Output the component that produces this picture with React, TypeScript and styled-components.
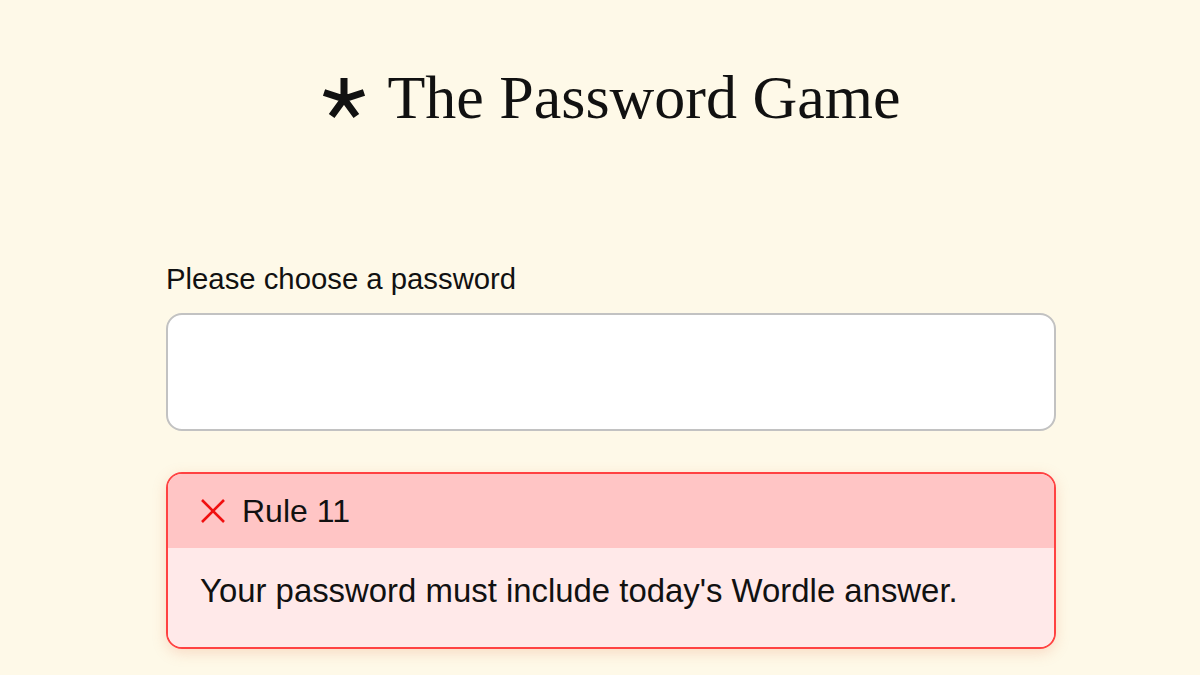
import React from 'react';
import styled, { createGlobalStyle } from 'styled-components';

const GlobalStyle = createGlobalStyle`
  html, body {
    margin: 0;
    padding: 0;
    background: #fef9e8;
  }
  body {
    font-family: "Liberation Sans", Arial, sans-serif;
    color: #111;
  }
`;

const Page = styled.div`
  width: 1200px;
  height: 675px;
  overflow: hidden;
  box-sizing: border-box;
  padding-left: 22px;
  display: flex;
  flex-direction: column;
  align-items: center;
`;

const Title = styled.h1`
  margin: 65px 0 0;
  display: flex;
  align-items: center;
  gap: 20px;
  font-family: "Liberation Serif", "Times New Roman", serif;
  font-weight: 400;
  font-size: 62px;
  line-height: 64px;
  color: #111;
`;

const Star = styled.svg`
  width: 46px;
  height: 46px;
  flex: none;
  margin-top: 4px;
`;

const Form = styled.div`
  width: 890px;
  margin-top: 133px;
  display: flex;
  flex-direction: column;
`;

const Label = styled.label`
  font-size: 29.3px;
  line-height: 34px;
  margin-bottom: 17px;
`;

const PasswordBox = styled.div`
  height: 118px;
  background: #fff;
  border: 2px solid #c2c2c2;
  border-radius: 16px;
  box-sizing: border-box;
`;

const Rule = styled.div`
  margin-top: 41px;
  border: 2px solid #ff4242;
  border-radius: 16px;
  overflow: hidden;
  box-shadow: 0 4px 14px rgba(230, 130, 90, 0.25);
`;

const RuleHead = styled.div`
  height: 74px;
  background: #ffc5c5;
  display: flex;
  align-items: center;
  gap: 16px;
  padding-left: 32px;
  font-size: 32px;
`;

const RuleBody = styled.div`
  background: #ffe9e9;
  height: 99px;
  box-sizing: border-box;
  padding: 24px 32px 0;
  font-size: 32.9px;
  line-height: 38px;
`;

const Cross = () => (
  <svg width="26" height="26" viewBox="0 0 26 26">
    <path d="M2 2 L24 24 M24 2 L2 24" stroke="#f01010" strokeWidth="2.6" fill="none" />
  </svg>
);

const Asterisk = () => {
  const arms = [-90, -18, 54, 126, 198].map((a) => {
    const r = (a * Math.PI) / 180;
    return `M23 23 L${23 + 21 * Math.cos(r)} ${23 + 21 * Math.sin(r)}`;
  });
  return (
    <Star viewBox="0 0 46 46">
      <path d={arms.join(' ')} stroke="#111" strokeWidth="7" fill="none" />
    </Star>
  );
};

export default function App() {
  return (
    <Page>
      <GlobalStyle />
      <Title>
        <Asterisk />
        The Password Game
      </Title>
      <Form>
        <Label>Please choose a password</Label>
        <PasswordBox />
        <Rule>
          <RuleHead>
            <Cross />
            Rule 11
          </RuleHead>
          <RuleBody>Your password must include today's Wordle answer.</RuleBody>
        </Rule>
      </Form>
    </Page>
  );
}
